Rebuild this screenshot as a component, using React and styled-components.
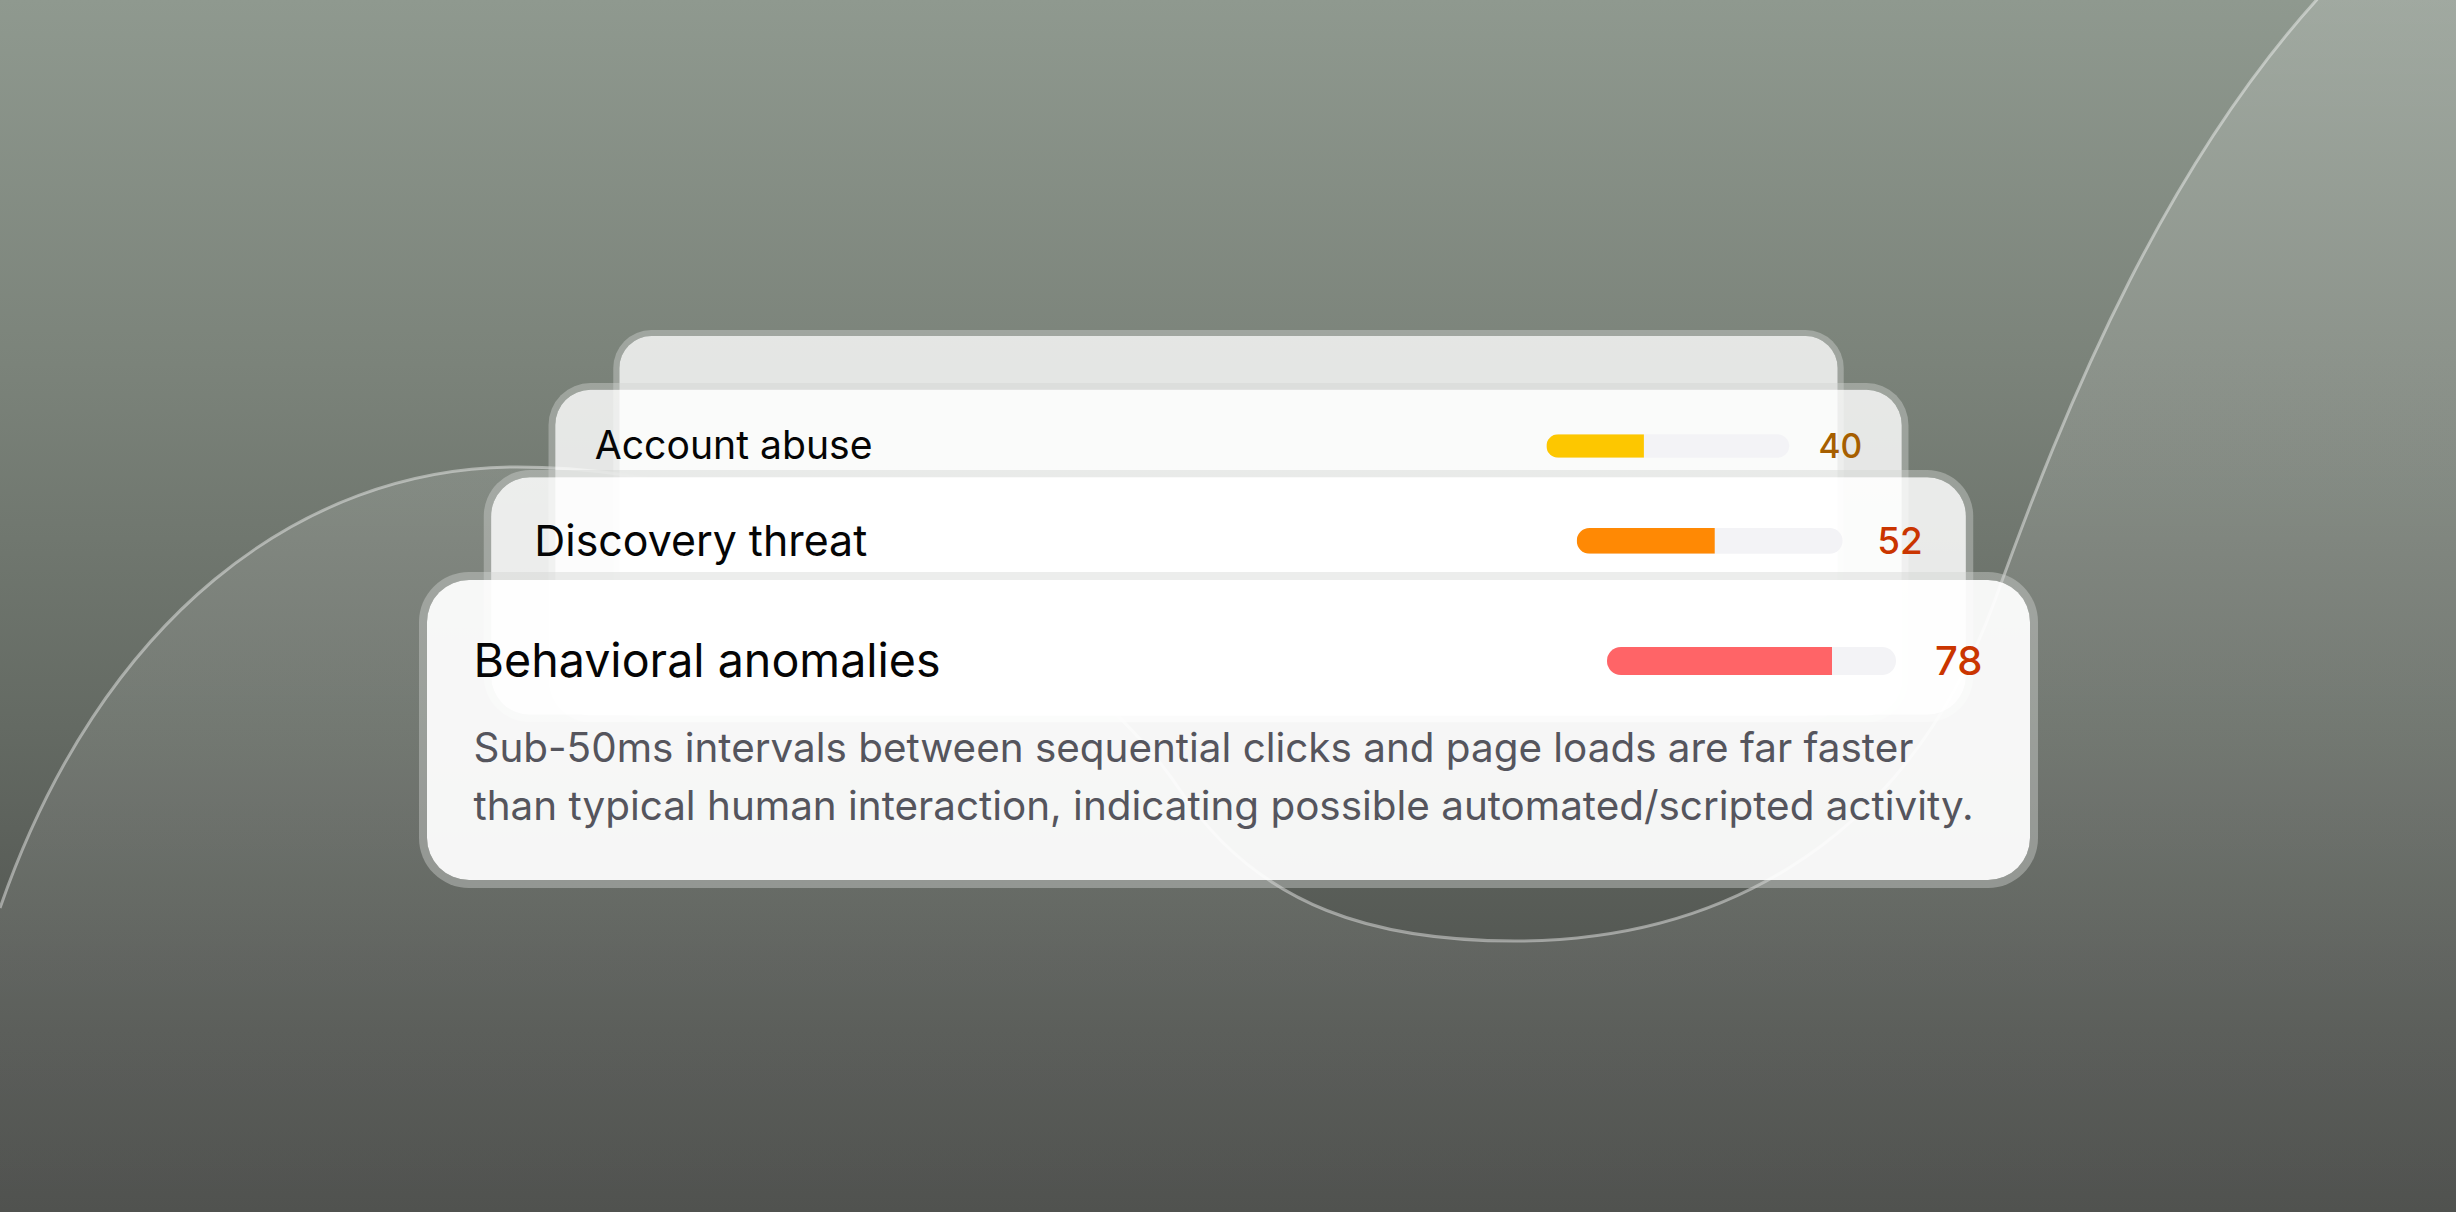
import React from 'react'
import styled, { createGlobalStyle } from 'styled-components'

const GlobalStyle = createGlobalStyle`
  html, body {
    margin: 0;
    padding: 0;
  }
  body {
    font-family: Inter, "Noto Sans", "Liberation Sans", sans-serif;
    -webkit-font-smoothing: antialiased;
  }
`

const Page = styled.div`
  position: relative;
  width: 2456px;
  height: 1212px;
  overflow: hidden;
  background: linear-gradient(180deg, #8f998f 0%, #7b837a 30%, #646a63 60%, #4f524e 85%, #454744 100%);
`

const Wave = styled.svg`
  position: absolute;
  inset: 0;
  width: 100%;
  height: 100%;
`

const Stage = styled.main`
  position: relative;
  display: flex;
  justify-content: center;
  padding-top: 330px;
`

const Stack = styled.div`
  display: grid;
  justify-items: center;
`

const Card = styled.section`
  grid-area: 1 / 1;
  box-sizing: border-box;
  width: 1619px;
  height: ${(p) => (p.$height ? `${p.$height}px` : 'auto')};
  margin-top: ${(p) => p.$top}px;
  transform: scale(${(p) => p.$scale});
  transform-origin: top center;
  padding: ${(p) => p.$padTop}px 47px 45px;
  border: 8px solid rgba(210, 213, 210, 0.42);
  border-radius: 50px;
  background: rgba(255, 255, 255, ${(p) => p.$alpha});
  background-clip: padding-box;
`

const Row = styled.div`
  display: flex;
  align-items: center;
  gap: 40px;
`

const Title = styled.h3`
  flex: 1;
  margin: 0;
  font-size: 46.6px;
  line-height: 55px;
  font-weight: 400;
  color: #050505;
`

const Meter = styled.div`
  display: flex;
  align-items: center;
  gap: 24px;
`

const Track = styled.div`
  width: 289px;
  height: 28px;
  border-radius: 14px;
  background: #f3f3f6;
  overflow: hidden;
`

const Fill = styled.div`
  height: 100%;
  background: ${(p) => p.$color};
`

const Score = styled.span`
  width: 63px;
  text-align: right;
  font-size: 40px;
  line-height: 55px;
  font-weight: 500;
  color: ${(p) => p.$color};
`

const Description = styled.p`
  margin: 31px 0 0;
  font-size: 40.4px;
  line-height: 58px;
  font-weight: 400;
  color: #55555d;
`

const cards = [
  { id: 'back', scale: 0.76, top: 0, height: 516, alpha: 0.8, padTop: 40 },
  {
    id: 'account',
    title: 'Account abuse',
    score: 40,
    bar: '#fdc700',
    text: '#a65f00',
    scale: 0.84,
    top: 53,
    height: 404,
    alpha: 0.82,
    padTop: 39,
  },
  {
    id: 'discovery',
    title: 'Discovery threat',
    score: 52,
    bar: '#ff8904',
    text: '#ca3500',
    scale: 0.92,
    top: 140,
    height: 274,
    alpha: 0.85,
    padTop: 41,
  },
  {
    id: 'behavior',
    title: 'Behavioral anomalies',
    score: 78,
    bar: '#ff6467',
    text: '#ca3500',
    scale: 1,
    top: 242,
    alpha: 0.94,
    padTop: 53,
    description:
      'Sub-50ms intervals between sequential clicks and page loads are far faster than typical human interaction, indicating possible automated/scripted activity.',
  },
]

const curve =
  'M0 908 C100 620 300 467 517 467 C800 467 1080 640 1180 790 C1260 910 1380 941 1515 941 C1700 941 1900 860 1995 600 C2060 420 2170 140 2355 -40'

function App() {
  return (
    <>
      <GlobalStyle />
      <Page>
        <Wave viewBox="0 0 2456 1212" preserveAspectRatio="none">
          <defs>
            <linearGradient id="waveFill" x1="0" y1="0" x2="0" y2="1">
              <stop offset="0" stopColor="#ffffff" stopOpacity="0.16" />
              <stop offset="1" stopColor="#ffffff" stopOpacity="0.06" />
            </linearGradient>
          </defs>
          <path d={`${curve} L2456 -40 L2456 1212 L0 1212 Z`} fill="url(#waveFill)" />
          <path d={curve} fill="none" stroke="rgba(255,255,255,0.42)" strokeWidth="3" />
        </Wave>
        <Stage>
          <Stack>
            {cards.map((c) => (
              <Card
                key={c.id}
                $scale={c.scale}
                $top={c.top}
                $height={c.height}
                $alpha={c.alpha}
                $padTop={c.padTop}
              >
                {c.title && (
                  <Row>
                    <Title>{c.title}</Title>
                    <Meter>
                      <Track>
                        <Fill $color={c.bar} style={{ width: `${c.score}%` }} />
                      </Track>
                      <Score $color={c.text}>{c.score}</Score>
                    </Meter>
                  </Row>
                )}
                {c.description && <Description>{c.description}</Description>}
              </Card>
            ))}
          </Stack>
        </Stage>
      </Page>
    </>
  )
}

export default App
